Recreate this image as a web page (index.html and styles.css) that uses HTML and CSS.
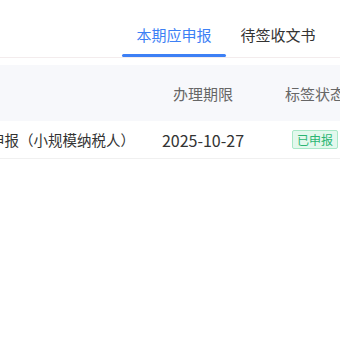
FILE: index.html
```html
<!DOCTYPE html>
<html lang="zh-CN">
<head>
    <meta charset="UTF-8">
    <meta name="viewport" content="width=device-width, initial-scale=1.0">
    <title>申报列表</title>
    <link rel="stylesheet" href="styles.css">
</head>
<body>
    <div class="page">
        <div class="tabs">
            <div class="tab active">本期应申报</div>
            <div class="tab">待签收文书</div>
        </div>
        <div class="table">
            <div class="table-head">
                <div class="cell cell-name"></div>
                <div class="cell cell-date">办理期限</div>
                <div class="cell cell-status">标签状态</div>
            </div>
            <div class="table-row">
                <div class="cell cell-name"><span>增值税及附加税费申报（小规模纳税人）</span></div>
                <div class="cell cell-date date">2025-10-27</div>
                <div class="cell cell-status"><span class="tag">已申报</span></div>
            </div>
        </div>
    </div>
</body>
</html>
```

FILE: styles.css
```css
body {
    margin: 0;
    background: #ffffff;
    font-family: "Noto Sans CJK SC", "Noto Sans", sans-serif;
    overflow: hidden;
}

.page {
    width: 340px;
    overflow: hidden;
}

.tabs {
    display: flex;
    padding-left: 122px;
    height: 57px;
    border-bottom: 1px solid #f3eced;
}

.tab {
    position: relative;
    width: 104px;
    flex-shrink: 0;
    text-align: center;
    font-size: 15px;
    line-height: 20px;
    padding-top: 25px;
    color: #333333;
}

.tab.active {
    color: #3d80f5;
}

.tab.active::after {
    content: "";
    position: absolute;
    left: 0;
    right: 0;
    bottom: 0;
    height: 3px;
    border-radius: 2px;
    background: #3d80f5;
}

.table {
    margin-top: 7px;
}

.table-head,
.table-row {
    display: grid;
    grid-template-columns: 148px 110px 114px;
    width: 372px;
}

.table-head {
    height: 56px;
    background: #f7f8fb;
    color: #666666;
}

.table-row {
    height: 37px;
    border-bottom: 1px solid #f0f0f0;
    color: #333333;
}

.cell {
    display: flex;
    align-items: center;
    justify-content: center;
    font-size: 15px;
    white-space: nowrap;
    overflow: hidden;
}

.table-head .cell {
    padding-top: 1px;
}

.cell-name {
    justify-content: flex-end;
    padding-right: 13px;
    font-size: 14.5px;
}

.date {
    font-size: 16px;
}

.tag {
    display: inline-block;
    font-size: 12px;
    line-height: 17px;
    padding: 0 4px;
    color: #2bb673;
    background: #e3f8ed;
    border: 1px solid #a9e8c8;
    border-radius: 2px;
}
```
